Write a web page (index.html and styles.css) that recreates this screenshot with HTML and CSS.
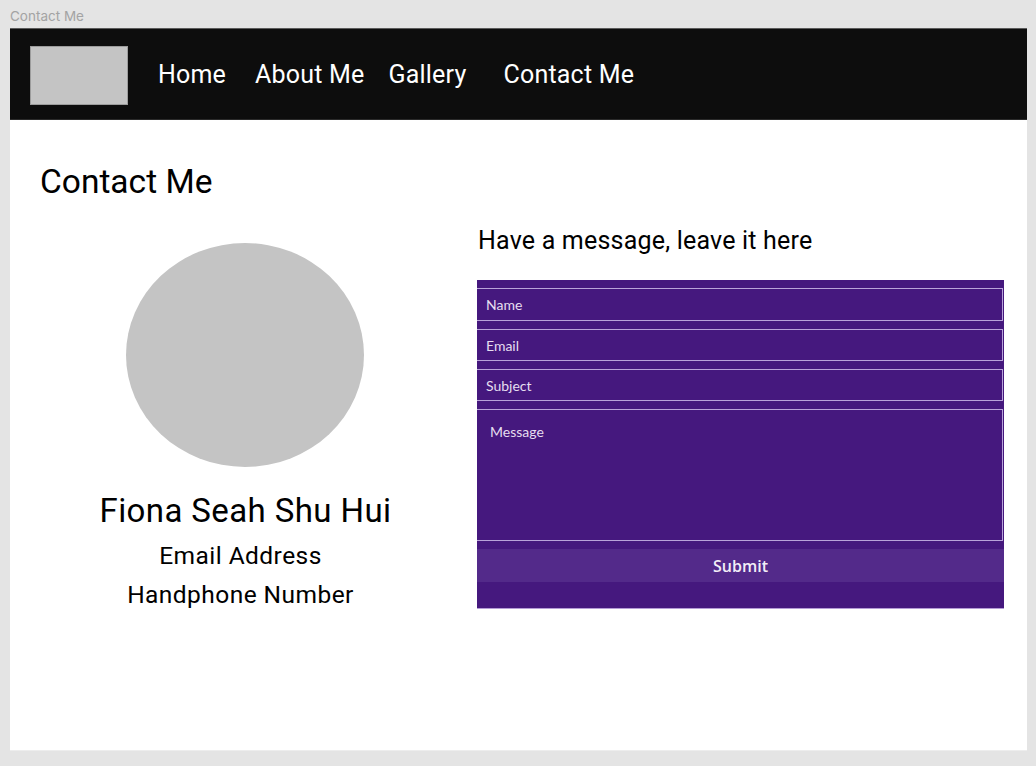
FILE: index.html
```html
<!DOCTYPE html>
<html lang="en">
<head>
<meta charset="utf-8">
<title>Contact Me</title>
<link rel="stylesheet" href="styles.css">
</head>
<body>
  <div class="frame-label">Contact Me</div>
  <div class="frame">
    <nav class="navbar">
      <div class="logo"></div>
      <a class="nav-link nav-home" href="#">Home</a>
      <a class="nav-link nav-about" href="#">About Me</a>
      <a class="nav-link nav-gallery" href="#">Gallery</a>
      <a class="nav-link nav-contact" href="#">Contact Me</a>
    </nav>
    <main class="content">
      <h1 class="page-title">Contact Me</h1>
      <div class="columns">
        <section class="profile">
          <div class="avatar"></div>
          <div class="profile-name">Fiona Seah Shu Hui</div>
          <div class="profile-info">
            <div class="info-line">Email Address</div>
            <div class="info-line">Handphone Number</div>
          </div>
        </section>
        <section class="message-col">
          <h2 class="message-title">Have a message, leave it here</h2>
          <form class="contact-form">
            <div class="field">Name</div>
            <div class="field">Email</div>
            <div class="field">Subject</div>
            <div class="field field-message">Message</div>
            <button class="submit" type="button">Submit</button>
          </form>
        </section>
      </div>
    </main>
  </div>
</body>
</html>
```

FILE: styles.css
```css
* { box-sizing: border-box; }

html, body {
  margin: 0;
  padding: 0;
}

body {
  background: #e4e4e4;
  width: 1036px;
  height: 766px;
  overflow: hidden;
  padding: 0 9px 0 10px;
  font-family: Roboto, "Liberation Sans", sans-serif;
}

.frame-label {
  height: 28px;
  padding-top: 9px;
  font-family: Inter, Roboto, sans-serif;
  font-size: 13.5px;
  line-height: 15px;
  color: #a3a3a3;
}

.frame {
  width: 1017px;
  height: 723px;
  background: #ffffff;
  border-bottom: 1px solid #ededed;
}

.navbar {
  height: 92px;
  background: #0d0d0d;
  border-top: 1px solid #5a5a5a;
  border-bottom: 1px solid #2a2a2a;
  display: flex;
  align-items: center;
  padding-left: 20px;
}

.logo {
  width: 98px;
  height: 59px;
  background: #c4c4c4;
  border: 1px solid #9c9c9c;
  margin-top: 2px;
}

.nav-link {
  color: #ffffff;
  text-decoration: none;
  font-size: 25px;
  letter-spacing: 0.2px;
  line-height: 28px;
  margin-top: 2px;
}

.nav-home { margin-left: 30px; }
.nav-about { margin-left: 29px; }
.nav-gallery { margin-left: 24px; }
.nav-contact { margin-left: 37px; }

.content {
  padding-top: 42px;
}

.page-title {
  margin: 0 0 0 30px;
  font-size: 33.5px;
  font-weight: 400;
  line-height: 40px;
  color: #000;
}

.columns {
  display: grid;
  grid-template-columns: 467px 527px;
}

.profile {
  padding-top: 41px;
}

.avatar {
  width: 238px;
  height: 224px;
  margin-left: 116px;
  border-radius: 50%;
  background: #c4c4c4;
}

.profile-name {
  margin-top: 25px;
  padding-left: 4px;
  text-align: center;
  font-size: 33px;
  letter-spacing: 0.4px;
  line-height: 38px;
  color: #000;
}

.profile-info {
  padding-right: 6px;
  text-align: center;
  margin-top: 7px;
}

.info-line {
  font-size: 24.5px;
  letter-spacing: 0.45px;
  line-height: 38.5px;
  color: #000;
}

.message-title {
  margin: 24px 0 0 1px;
  font-size: 25px;
  letter-spacing: 0.2px;
  font-weight: 400;
  line-height: 30px;
  color: #000;
}

.contact-form {
  margin-top: 24px;
  background: #45187e;
  border-bottom: 1px solid #b49bd6;
  padding: 8px 0 26px;
  display: flex;
  flex-direction: column;
}

.field {
  height: 33px;
  margin-bottom: 8px;
  width: 526px;
  border-top: 1px solid #b9a3da;
  border-bottom: 1px solid #b9a3da;
  border-right: 1px solid #b9a3da;
  padding-left: 9px;
  display: flex;
  align-items: center;
  font-family: Lato, "Open Sans", sans-serif;
  font-size: 14px;
  color: #e6def0;
}

.field + .field { height: 32px; }

.field-message {
  height: 132px !important;
  align-items: flex-start;
  padding: 13px 0 0 13px;
  margin-bottom: 8px;
}

.submit {
  height: 33px;
  border: none;
  background: #532a8a;
  color: #f2eef7;
  font-family: "Open Sans", sans-serif;
  font-size: 16px;
  font-weight: 600;
  padding: 0;
  cursor: pointer;
}
```
